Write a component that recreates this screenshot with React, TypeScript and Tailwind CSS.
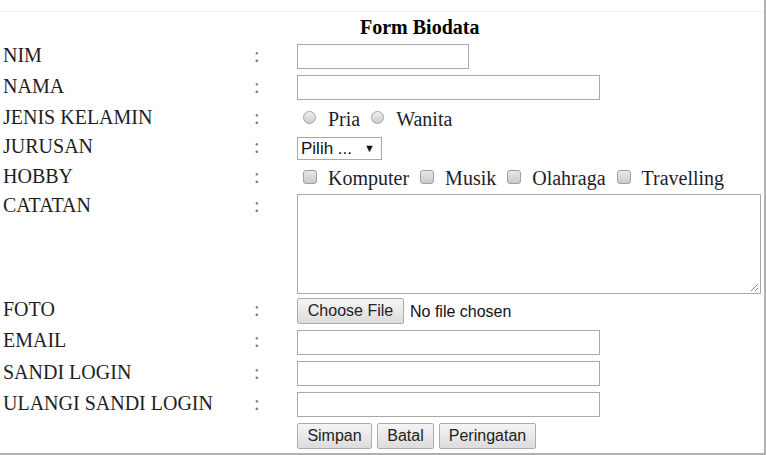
import React from 'react';

const serif = { fontFamily: '"Liberation Serif", "Times New Roman", serif' };
const sans = { fontFamily: '"Liberation Sans", Arial, sans-serif' };

function Radio({ label }: { label: string }) {
  return (
    <span className="flex items-center">
      <span className="w-[13px] h-[13px] rounded-full border border-[#a4a4a4] bg-gradient-to-b from-[#f0f0f0] to-[#cccccc] mt-[-4px]" />
      <span className="ml-[12px] mr-[11px]">{label}</span>
    </span>
  );
}

function Check({ label }: { label: string }) {
  return (
    <span className="flex items-center">
      <span className="w-[14px] h-[14px] rounded-[3px] border border-[#a0a0a0] bg-gradient-to-b from-[#e8e8e8] to-[#cacaca] mt-[-4px]" />
      <span className="ml-[11px] mr-[11px]">{label}</span>
    </span>
  );
}

function Btn({ children, w }: { children: React.ReactNode; w: string }) {
  return (
    <button
      type="button"
      className={`${w} h-[26px] rounded-[2px] border border-[#acacac] bg-gradient-to-b from-[#f5f5f5] to-[#dcdcdc] text-[16px] text-[#222] leading-none`}
      style={sans}
    >
      {children}
    </button>
  );
}

function Row({ label, h, top, children }: { label: string; h: string; top?: boolean; children?: React.ReactNode }) {
  return (
    <div className={`flex ${h} ${top ? 'items-start' : 'items-center'}`}>
      <div className={`w-[254px] pl-[3px] text-[#1e1e1e] ${top ? 'pt-[1px]' : 'pb-[3px]'}`}>{label}</div>
      <div className={`w-[43px] text-[#777] ${top ? 'pt-[1px]' : 'pb-[3px]'}`}>{label ? ':' : ''}</div>
      <div className="flex items-center">{children}</div>
    </div>
  );
}

export default function App() {
  const textInput = 'h-[25px] border border-[#a9a9a9] bg-white outline-none';
  return (
    <div className="w-[766px] h-[455px] bg-white overflow-hidden" style={serif}>
      <div className="w-[766px] h-[455px] border-r-2 border-b-2 border-[#b0b0b0] text-[20px] leading-[23px]">
        <div className="h-[12px] border-b border-[#f3f3f3]" />
        <div className="h-[29px] flex items-center pt-[2px]">
          <div className="pl-[360px] font-bold text-black">Form Biodata</div>
        </div>
        <Row label="NIM" h="h-[31px]">
          <input className={`${textInput} w-[172px]`} />
        </Row>
        <Row label="NAMA" h="h-[31px]">
          <input className={`${textInput} w-[303px]`} />
        </Row>
        <Row label="JENIS KELAMIN" h="h-[31px]">
          <div className="flex items-center pl-[6px] text-[#1e1e2a] pt-[2px]">
            <Radio label="Pria" />
            <Radio label="Wanita" />
          </div>
        </Row>
        <Row label="JURUSAN" h="h-[28px]">
          <div
            className="w-[85px] h-[23px] border border-[#a9a9a9] flex items-center justify-between pl-[3px] pr-[6px] text-[17px] text-[#111]"
            style={sans}
          >
            <span>Pilih ...</span>
            <span className="text-[11px]">▼</span>
          </div>
        </Row>
        <Row label="HOBBY" h="h-[31px]">
          <div className="flex items-center pl-[6px] text-[#1e1e2a] pt-[2px]">
            <Check label="Komputer" />
            <Check label="Musik" />
            <Check label="Olahraga" />
            <Check label="Travelling" />
          </div>
        </Row>
        <Row label="CATATAN" h="h-[103px]" top>
          <div className="relative w-[464px] h-[100px] border border-[#a9a9a9] mt-[1px]">
            <svg className="absolute right-[1px] bottom-[1px]" width="10" height="10" viewBox="0 0 10 10">
              <path d="M9 2 L2 9 M9 6 L6 9" stroke="#8a8a8a" strokeWidth="1" />
            </svg>
          </div>
        </Row>
        <Row label="FOTO" h="h-[30px]">
          <div className="flex items-center">
            <Btn w="w-[107px]">Choose File</Btn>
            <span className="ml-[6px] text-[16px] text-[#111]" style={sans}>No file chosen</span>
          </div>
        </Row>
        <Row label="EMAIL" h="h-[32px]">
          <input className={`${textInput} w-[303px]`} />
        </Row>
        <Row label="SANDI LOGIN" h="h-[31px]">
          <input type="password" className={`${textInput} w-[303px]`} />
        </Row>
        <Row label="ULANGI SANDI LOGIN" h="h-[31px]">
          <input type="password" className={`${textInput} w-[303px]`} />
        </Row>
        <Row label="" h="h-[31px]">
          <div className="flex items-center gap-[5px]">
            <Btn w="w-[75px]">Simpan</Btn>
            <Btn w="w-[57px]">Batal</Btn>
            <Btn w="w-[97px]">Peringatan</Btn>
          </div>
        </Row>
      </div>
    </div>
  );
}
